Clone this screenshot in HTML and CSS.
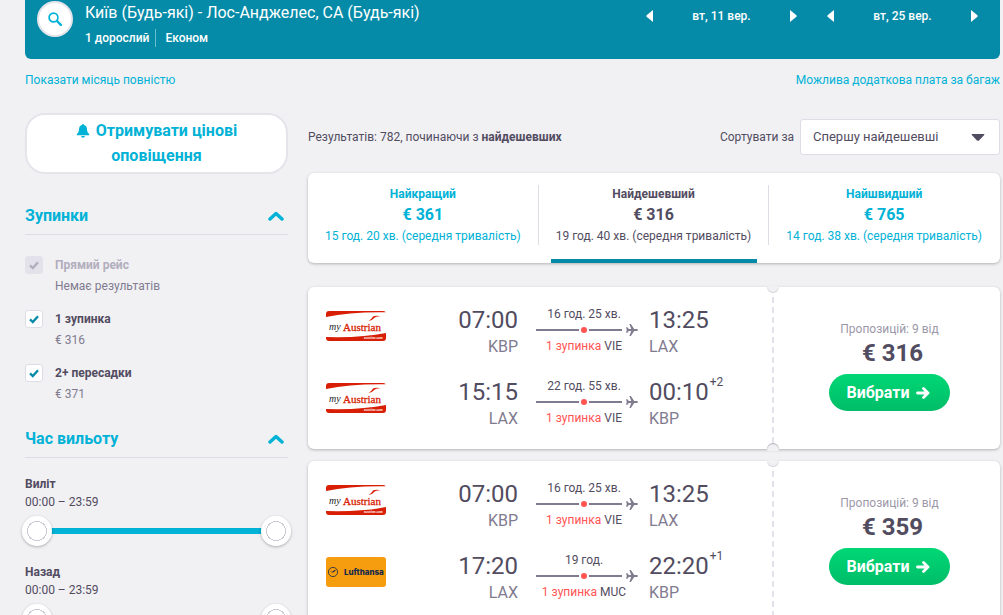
FILE: index.html
```html
<!DOCTYPE html>
<html lang="uk">
<head>
<meta charset="utf-8">
<meta name="viewport" content="width=device-width, initial-scale=1">
<title>Київ - Лос-Анджелес</title>
<link rel="stylesheet" href="styles.css">
</head>
<body>
<svg class="defs" aria-hidden="true">
  <symbol id="check" viewBox="0 0 10 10"><path d="M1 5.3 3.8 8 9 2.2" fill="none" stroke="currentColor" stroke-width="2.3"/></symbol>
  <symbol id="chevron" viewBox="0 0 16 10"><path d="M2 8 8 2.5 14 8" fill="none" stroke="currentColor" stroke-width="3.4" stroke-linecap="round" stroke-linejoin="round"/></symbol>
  <symbol id="left" viewBox="0 0 8 12"><path d="M7 0v12L.6 6.8Q0 6 .6 5.2z" fill="currentColor"/></symbol>
  <symbol id="right" viewBox="0 0 8 12"><path d="M1 0v12l6.4-5.2Q8 6 7.4 5.2z" fill="currentColor"/></symbol>
  <symbol id="plane" viewBox="0 0 12 12"><path d="M0 3.2h1.4l1.4 1.9h2.4L3.4 0h1.5l3.3 5.1h2.6q1.2.3 1.2.9t-1.2.9H8.2L4.9 12H3.4l1.8-5.1H2.8L1.4 8.8H0L.8 6z" fill="currentColor"/></symbol>
  <symbol id="austrian" viewBox="0 0 60 30">
    <rect width="60" height="30" fill="#fff"/>
    <path d="M0 0h60v1.3Q24 .8 0 6z" fill="#d81e05"/>
    <path d="M0 30v-4Q36 27 60 22v8z" fill="#d81e05"/>
    <path d="M42.5 10q3-1.8 4.800-4.800Q51 4.400 55 5.200q-3.800-.2-6.200 1.200-2 2.600-6.300 3.600z" fill="#d81e05"/>
  </symbol>
</svg>

<div class="page">
  <header class="search">
    <button class="search-button" aria-label="Змінити пошук"><svg width="14" height="14" viewBox="0 0 14 14"><circle cx="5.5" cy="5.5" r="4.400" fill="none" stroke="currentColor" stroke-width="1.700"/><path d="m9 9 3.800 3.800" stroke="currentColor" stroke-width="2.400" stroke-linecap="round"/></svg></button>
    <div class="search-text">
      <h1>Київ (Будь-які) - Лос-Анджелес, CA (Будь-які)</h1>
      <p><span>1 дорослий</span><span>Економ</span></p>
    </div>
    <div class="dates">
      <div class="date"><button aria-label="Попередній день"><svg><use href="#left"/></svg></button><span>вт, 11 вер.</span><button aria-label="Наступний день"><svg><use href="#right"/></svg></button></div>
      <div class="date"><button aria-label="Попередній день"><svg><use href="#left"/></svg></button><span>вт, 25 вер.</span><button aria-label="Наступний день"><svg><use href="#right"/></svg></button></div>
    </div>
  </header>

  <nav class="links"><a href="#">Показати місяць повністю</a><a href="#">Можлива додаткова плата за багаж</a></nav>

  <div class="columns">
    <aside class="filters">
      <button class="alerts"><svg width="14" height="14" viewBox="0 0 14 14"><path d="M7 0q1 0 1 1.100Q11 2 11 5.500 11 9 13.200 10.200v1H.8v-1Q3 9 3 5.500 3 2 6 1.100 6 0 7 0zM5 12h4q-.3 1.700-2 1.700T5 12z" fill="currentColor"/></svg> Отримувати цінові оповіщення</button>

      <section>
        <h2><button>Зупинки<svg class="chevron"><use href="#chevron"/></svg></button></h2>
        <div class="stops">
          <label class="option disabled"><span class="tick"><input type="checkbox" checked disabled><svg><use href="#check"/></svg></span><span><b>Прямий рейс</b><small>Немає результатів</small></span></label>
          <label class="option"><span class="tick"><input type="checkbox" checked><svg><use href="#check"/></svg></span><span><b>1 зупинка</b><small>€ 316</small></span></label>
          <label class="option"><span class="tick"><input type="checkbox" checked><svg><use href="#check"/></svg></span><span><b>2+ пересадки</b><small>€ 371</small></span></label>
        </div>
      </section>

      <section>
        <h2><button>Час вильоту<svg class="chevron"><use href="#chevron"/></svg></button></h2>
        <div class="times">
          <div class="range"><b>Виліт</b><span>00:00 – 23:59</span>
            <div class="slider"><input type="range" min="0" max="1439" value="0" aria-label="Виліт від"><input type="range" min="0" max="1439" value="1439" aria-label="Виліт до"></div></div>
          <div class="range"><b>Назад</b><span>00:00 – 23:59</span>
            <div class="slider"><input type="range" min="0" max="1439" value="0" aria-label="Назад від"><input type="range" min="0" max="1439" value="1439" aria-label="Назад до"></div></div>
        </div>
      </section>
    </aside>

    <main class="results">
      <div class="toolbar">
        <p>Результатів: 782, починаючи з <b>найдешевших</b></p>
        <div class="sort"><label for="sort">Сортувати за</label>
          <div class="select"><select id="sort"><option>Спершу найдешевші</option></select><svg width="14" height="7" viewBox="0 0 14 7"><path d="M1.200 0h11.600q1 .2.400 1L8 6.400q-1 .8-2 0L.8 1q-.6-.8.4-1z" fill="currentColor"/></svg></div></div>
      </div>

      <div class="tabs">
        <button class="tab"><span class="tab-text"><b>Найкращий</b><strong>€ 361</strong><span>15 год. 20 хв. (середня тривалість)</span></span><i></i></button>
        <button class="tab active"><span class="tab-text"><b>Найдешевший</b><strong>€ 316</strong><span>19 год. 40 хв. (середня тривалість)</span></span><i></i></button>
        <button class="tab"><span class="tab-text"><b>Найшвидший</b><strong>€ 765</strong><span>14 год. 38 хв. (середня тривалість)</span></span><i></i></button>
      </div>

      <article class="ticket">
        <div class="legs">
          <div class="leg">
            <div class="logo"><svg class="austrian" viewBox="0 0 60 30"><use href="#austrian"/><text class="my" x="3" y="19">my</text><text class="name" x="17" y="20">Austrian</text><text class="site" x="38" y="28">austrian.com</text></svg></div>
            <div class="point from"><span class="time">07:00</span><span class="code">KBP</span></div>
            <div class="route"><span>16 год. 25 хв.</span><div class="line"><i></i><em></em><i class="short"></i><svg><use href="#plane"/></svg></div><span><mark>1 зупинка</mark> VIE</span></div>
            <div class="point to"><span class="time">13:25</span><span class="code">LAX</span></div>
          </div>
          <div class="leg">
            <div class="logo"><svg class="austrian" viewBox="0 0 60 30"><use href="#austrian"/><text class="my" x="3" y="19">my</text><text class="name" x="17" y="20">Austrian</text><text class="site" x="38" y="28">austrian.com</text></svg></div>
            <div class="point from"><span class="time">15:15</span><span class="code">LAX</span></div>
            <div class="route"><span>22 год. 55 хв.</span><div class="line"><i></i><em></em><i class="short"></i><svg><use href="#plane"/></svg></div><span><mark>1 зупинка</mark> VIE</span></div>
            <div class="point to"><span class="time">00:10<sup>+2</sup></span><span class="code">KBP</span></div>
          </div>
        </div>
        <div class="offer"><span>Пропозицій: 9 від</span><strong>€ 316</strong><button>Вибрати<svg width="14" height="12" viewBox="0 0 14 12"><path d="M1.500 6h10M7.500 1.500 12 6l-4.500 4.500" fill="none" stroke="currentColor" stroke-width="2.800" stroke-linecap="round" stroke-linejoin="round"/></svg></button></div>
      </article>

      <article class="ticket">
        <div class="legs">
          <div class="leg">
            <div class="logo"><svg class="austrian" viewBox="0 0 60 30"><use href="#austrian"/><text class="my" x="3" y="19">my</text><text class="name" x="17" y="20">Austrian</text><text class="site" x="38" y="28">austrian.com</text></svg></div>
            <div class="point from"><span class="time">07:00</span><span class="code">KBP</span></div>
            <div class="route"><span>16 год. 25 хв.</span><div class="line"><i></i><em></em><i class="short"></i><svg><use href="#plane"/></svg></div><span><mark>1 зупинка</mark> VIE</span></div>
            <div class="point to"><span class="time">13:25</span><span class="code">LAX</span></div>
          </div>
          <div class="leg">
            <div class="logo"><svg class="lufthansa" viewBox="0 0 60 30"><rect width="60" height="30" fill="#f59c0f"/><circle cx="7" cy="15" r="4.600" fill="none" stroke="#14284b" stroke-width=".8"/><path d="M2.800 13.800q2.400 1.600 4 .8 1-2 4.200-1.800-2 .4-2.600 2-1.800 2-5.600-1z" fill="#14284b"/><text x="18" y="18">Lufthansa</text></svg></div>
            <div class="point from"><span class="time">17:20</span><span class="code">LAX</span></div>
            <div class="route"><span>19 год.</span><div class="line"><i></i><em></em><i class="short"></i><svg><use href="#plane"/></svg></div><span><mark>1 зупинка</mark> MUC</span></div>
            <div class="point to"><span class="time">22:20<sup>+1</sup></span><span class="code">KBP</span></div>
          </div>
        </div>
        <div class="offer"><span>Пропозицій: 9 від</span><strong>€ 359</strong><button>Вибрати<svg width="14" height="12" viewBox="0 0 14 12"><path d="M1.500 6h10M7.500 1.500 12 6l-4.500 4.500" fill="none" stroke="currentColor" stroke-width="2.800" stroke-linecap="round" stroke-linejoin="round"/></svg></button></div>
      </article>
    </main>
  </div>
</div>
</body>
</html>
```
FILE: styles.css
```css
:root {
  --bg: #f1f1f4;
  --teal: #058ba8;
  --link: #00b2d6;
  --ink: #524c61;
  --muted: #817b8f;
  --rule: #dddde5;
  --red: #ff5452;
}
* { box-sizing: border-box; }
html { scrollbar-width: none; }
body {
  margin: 0;
  background: var(--bg);
  color: var(--ink);
  font: 12px/18px Roboto, "Noto Sans", sans-serif;
}
h1, h2, p { margin: 0; }
button {
  padding: 0;
  border: 0;
  background: none;
  color: inherit;
  font: inherit;
  cursor: pointer;
}
b { font-weight: 700; }
svg { display: block; }
.defs { position: absolute; width: 0; height: 0; }
.page { padding: 0 3px 0 25px; }

.search {
  display: flex;
  align-items: flex-start;
  gap: 12px;
  padding: 1px 22px 12px 12px;
  border-radius: 0 0 6px 6px;
  background: var(--teal);
  color: #fff;
}
.search-button {
  display: grid;
  place-items: center;
  width: 36px;
  height: 36px;
  border: 2px solid #e6e4eb;
  border-radius: 50%;
  background: #fff;
  color: var(--link);
}
.search-text { flex: 1; }
.search h1 { font-size: 16px; font-weight: 400; line-height: 24px; }
.search p { display: flex; padding-top: 4px; font-weight: 500; }
.search p span + span { margin-left: 6px; padding-left: 9px; border-left: 1px solid #6bbccd; }
.dates { display: flex; gap: 30px; padding-top: 6px; font-weight: 500; }
.date { display: flex; align-items: center; justify-content: space-between; width: 151px; }
.date svg { width: 8px; height: 12px; }

.links { display: flex; justify-content: space-between; padding: 12px 0 24px; }
.links a { color: var(--link); text-decoration: none; }

.columns { display: grid; grid-template-columns: 263px 1fr; gap: 20px; }
.alerts {
  width: 100%;
  padding: 3px 40px 4px;
  border: 2px solid #e6e4eb;
  border-radius: 20px;
  background: #fff;
  color: var(--link);
  font-size: 16px;
  font-weight: 700;
  line-height: 25px;
}
.alerts svg { display: inline-block; margin-right: 2px; vertical-align: -2px; }
.filters section { padding-top: 30px; }
.filters h2 { border-bottom: 1px solid var(--rule); font-size: 16px; line-height: 24px; }
.filters h2 button {
  display: flex;
  align-items: center;
  justify-content: space-between;
  width: 100%;
  padding: 0 4px 6px 0;
  color: var(--link);
}
.chevron { width: 16px; height: 10px; }
.stops { display: grid; gap: 12px; padding: 20px 0 0; margin-bottom: -8px; }
.option { display: flex; gap: 12px; color: var(--ink); }
.option b, .option small { display: block; font-size: 12px; line-height: 21px; }
.tick { display: grid; place-items: center; width: 18px; height: 18px; margin-top: 1px; }
.tick > * { grid-area: 1 / 1; }
.tick input {
  appearance: none;
  width: 18px;
  height: 18px;
  margin: 0;
  border: 1px solid var(--rule);
  border-radius: 3px;
  background: #fff;
}
.tick svg { width: 10px; height: 10px; color: var(--teal); pointer-events: none; }
.option small { color: var(--muted); }
.disabled b { color: #b2aebd; }
.disabled input { border-color: #e3e2ea; background: #e3e2ea; }
.disabled .tick svg { color: #b2aebd; }

.times { display: grid; gap: 17px; padding-top: 17px; }
.range { display: grid; }
.slider {
  display: grid;
  margin: 5px -3px 0;
  background: linear-gradient(var(--link), var(--link)) center / calc(100% - 30px) 6px no-repeat;
}
.slider input {
  grid-area: 1 / 1;
  appearance: none;
  width: 100%;
  height: 30px;
  margin: 0;
  background: none;
  pointer-events: none;
}
.slider input::-webkit-slider-thumb {
  appearance: none;
  width: 30px;
  height: 30px;
  border-radius: 50%;
  background: radial-gradient(circle, #fff 9px, #cbc9d3 9px, #cbc9d3 10px, #fff 10px);
  box-shadow: 0 1px 3px rgba(0, 0, 0, .3);
  pointer-events: auto;
}

.toolbar { display: flex; align-items: center; justify-content: space-between; padding: 6px 0 18px; }
.sort { display: flex; align-items: center; gap: 6px; }
.select { display: grid; align-items: center; width: 200px; }
.select > * { grid-area: 1 / 1; }
.select select {
  appearance: none;
  height: 36px;
  padding: 0 12px 2px;
  border: 1px solid var(--rule);
  border-radius: 3px;
  background: #fff;
  color: var(--ink);
  font: 13px Roboto, "Noto Sans", sans-serif;
}
.select svg { justify-self: end; margin-right: 15px; pointer-events: none; }

.tabs, .ticket { border-radius: 6px; background: #fff; box-shadow: 0 1px 3px rgba(37, 32, 31, .3); }
.tabs { display: grid; grid-template-columns: repeat(3, 1fr); margin-bottom: 24px; }
.tab { padding-top: 12px; color: var(--link); }
.tab-text { display: grid; border-right: 1px solid var(--rule); }
.tab:last-child .tab-text { border-color: transparent; }
.tab strong { font-size: 16px; line-height: 24px; }
.tab i { display: block; height: 4px; margin: 14px 12px 0; }
.active { color: var(--ink); }
.active i { background: var(--teal); }

.ticket { display: grid; grid-template-columns: 1fr 228px; margin-bottom: 12px; }
.legs { padding: 9px 0 9px 18px; }
.leg { display: flex; align-items: flex-start; height: 72px; padding-top: 10px; }
.logo { display: flex; flex: 1; align-items: center; height: 40px; }
.logo svg { width: 60px; height: 30px; border-radius: 3px; }
.austrian text { fill: #d81e05; font: 11px "Liberation Serif", serif; }
.austrian .name { stroke: #d81e05; stroke-width: .3; }
.austrian .my { fill: #222; font-size: 10px; font-style: italic; }
.austrian .site { fill: #fff; font: 700 3px "Liberation Sans", sans-serif; }
.lufthansa text { fill: #14284b; font: 800 8px Inter, sans-serif; }
.point { display: grid; }
.from { margin-right: 18px; text-align: right; }
.to { width: 123px; margin-left: 11px; }
.time { display: flex; font-size: 24px; line-height: 28px; }
.time sup { padding-left: 1px; font-size: 12px; line-height: 8px; }
.code { color: var(--muted); font-size: 16px; line-height: 26px; }
.route { width: 102px; line-height: 16px; text-align: center; white-space: nowrap; }
.route > span { display: block; padding-right: 6px; }
.route mark { background: none; color: var(--red); }
.line { display: flex; align-items: center; height: 16px; color: var(--muted); }
.line i { width: 43px; height: 2px; background: currentColor; }
.line .short { width: 33px; }
.line em { width: 6px; height: 6px; margin: 0 2px; border-radius: 50%; background: var(--red); }
.line svg { width: 12px; height: 12px; margin-left: 4px; }

.offer {
  position: relative;
  display: flex;
  flex-direction: column;
  align-items: center;
  justify-content: center;
  padding: 0 0 4px 7px;
  background: repeating-linear-gradient(#e3e2ea 0 6px, transparent 6px 10px) 0 0 / 2px 100% no-repeat;
  line-height: 16px;
}
.offer > span { color: #9d98a9; }
.offer strong { padding-left: 6px; font-size: 24px; line-height: 32px; }
.offer button {
  display: flex;
  align-items: center;
  gap: 7px;
  margin-top: 5px;
  padding: 0 20px 0 18px;
  border-radius: 19px;
  background: linear-gradient(#00d775, #00bd68);
  color: #fff;
  font-size: 16px;
  font-weight: 700;
  line-height: 37px;
}
.offer::before, .offer::after {
  content: "";
  position: absolute;
  left: -5px;
  width: 12px;
  background: var(--bg);
}
.offer::before {
  top: -1px;
  height: 7px;
  border-radius: 0 0 6px 6px;
  box-shadow: inset 0 -1px 1px #d5d4dc;
}
.offer::after {
  bottom: -2px;
  height: 8px;
  border-radius: 6px 6px 0 0;
  box-shadow: inset 0 1px 1px #b5b4bc;
}
```
